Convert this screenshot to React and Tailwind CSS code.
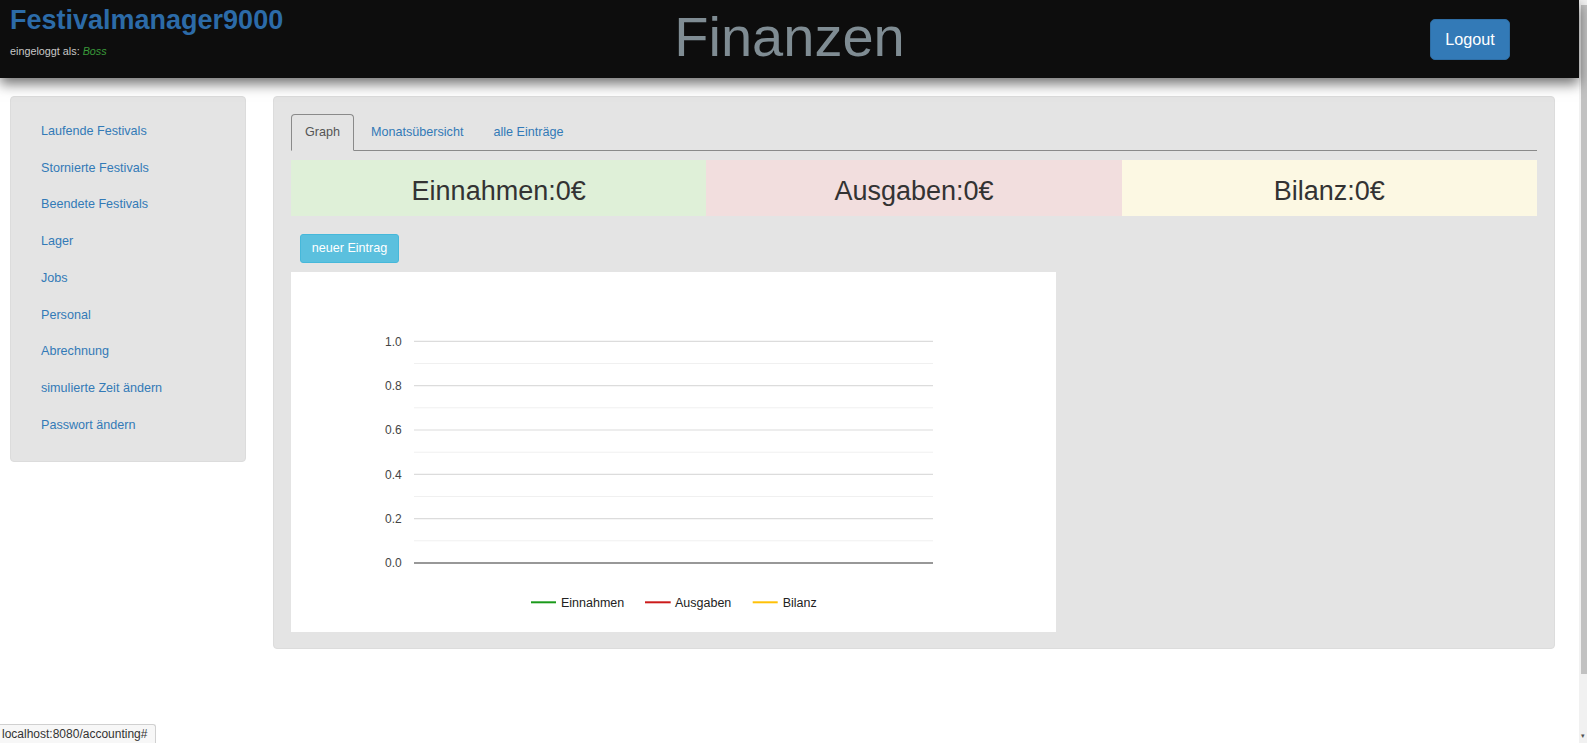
import React from "react";

const links = [
  "Laufende Festivals",
  "Stornierte Festivals",
  "Beendete Festivals",
  "Lager",
  "Jobs",
  "Personal",
  "Abrechnung",
  "simulierte Zeit ändern",
  "Passwort ändern",
];

function Chart() {
  const left = 123;
  const right = 642;
  const majors = [
    { v: "1.0", y: 69.3 },
    { v: "0.8", y: 113.6 },
    { v: "0.6", y: 158 },
    { v: "0.4", y: 202.3 },
    { v: "0.2", y: 246.6 },
  ];
  const minors = [91.5, 135.8, 180.2, 224.5, 268.8];
  return (
    <svg width="765" height="360" viewBox="0 0 765 360" className="block">
      {minors.map((y) => (
        <line key={y} x1={left} x2={right} y1={y} y2={y} stroke="#f0f0f0" strokeWidth="1" />
      ))}
      {majors.map((m) => (
        <line key={m.v} x1={left} x2={right} y1={m.y} y2={m.y} stroke="#dcdcdc" strokeWidth="1.2" />
      ))}
      <line x1={left} x2={right} y1={291} y2={291} stroke="#767676" strokeWidth="1.6" />
      {[...majors, { v: "0.0", y: 291 }].map((m) => (
        <text
          key={"t" + m.v}
          x={110.7}
          y={m.y + 4.3}
          textAnchor="end"
          fontFamily="'Liberation Sans', Arial, sans-serif"
          fontSize="12"
          fill="#444"
        >
          {m.v}
        </text>
      ))}
      <line x1={240} x2={265} y1={330.3} y2={330.3} stroke="#1a9a1a" strokeWidth="2" />
      <text x={270} y={334.6} fontFamily="'Liberation Sans', Arial, sans-serif" fontSize="12.5" fill="#222">
        Einnahmen
      </text>
      <line x1={354} x2={379.7} y1={330.3} y2={330.3} stroke="#cc1a1a" strokeWidth="2" />
      <text x={384} y={334.6} fontFamily="'Liberation Sans', Arial, sans-serif" fontSize="12.5" fill="#222">
        Ausgaben
      </text>
      <line x1={461.7} x2={486.7} y1={330.3} y2={330.3} stroke="#ffc107" strokeWidth="2" />
      <text x={491.7} y={334.6} fontFamily="'Liberation Sans', Arial, sans-serif" fontSize="12.5" fill="#222">
        Bilanz
      </text>
    </svg>
  );
}

export default function App() {
  return (
    <div className="relative flex w-[1587px] h-[743px] overflow-hidden bg-white font-['Liberation_Sans',Arial,sans-serif]">
      <div className="w-[1579px] flex flex-col">
        {/* Header */}
        <header className="relative z-10 h-[78px] bg-[#0d0d0d] grid grid-cols-3 shadow-[0_6px_12px_rgba(0,0,0,0.55)]">
          <div className="pl-[10px] pt-[6.5px]">
            <div className="text-[27px] leading-[27px] font-bold text-[#2c6ba8]">Festivalmanager9000</div>
            <div className="mt-[10.5px] text-[10.8px] leading-[15px] text-[#c8c8c8]">
              eingeloggt als: <span className="italic text-[#3a9a3a]">Boss</span>
            </div>
          </div>
          <div className="flex justify-center pt-[8.6px]">
            <div className="text-[56px] leading-[56px] text-[#7f8c93]">Finanzen</div>
          </div>
          <div className="flex justify-end items-center pr-[69px]">
            <button className="w-[80px] h-[41px] rounded-[5px] bg-[#337ab7] border border-[#2e6da4] text-white text-[16.2px] leading-none">
              Logout
            </button>
          </div>
        </header>

        {/* Body */}
        <div className="flex items-start pt-[18px] pl-[10px] pr-[24px] gap-[27px]">
          {/* Sidebar */}
          <nav className="w-[236px] shrink-0 bg-[#e4e4e4] rounded-[4px] border border-[#dcdcdc] pt-[16px] pb-[17px]">
            {links.map((l) => (
              <div key={l} className="h-[36.75px] flex items-center pl-[30px] text-[12.6px] text-[#337ab7]">
                {l}
              </div>
            ))}
          </nav>

          {/* Main panel */}
          <main className="flex-1 bg-[#e4e4e4] rounded-[4px] border border-[#dcdcdc] pt-[17px] px-[17px] pb-[16px]">
            {/* Tabs */}
            <div className="flex h-[37px] border-b border-[#8a8a8a] text-[12.6px]">
              <div className="h-[37px] px-[13px] flex items-center rounded-t-[4px] border border-[#8a8a8a] border-b-[#e4e4e4] bg-[#e4e4e4] text-[#555]">
                Graph
              </div>
              <div className="ml-[2px] px-[15px] flex items-center text-[#337ab7]">Monatsübersicht</div>
              <div className="ml-[1px] px-[14px] flex items-center text-[#337ab7]">alle Einträge</div>
            </div>

            {/* Summary */}
            <div className="mt-[9px] grid grid-cols-3 h-[56px] text-[27px] text-[#333]">
              <div className="bg-[#dff0d8] flex items-center justify-center pt-[6px]">Einnahmen:0€</div>
              <div className="bg-[#f2dede] flex items-center justify-center pt-[6px]">Ausgaben:0€</div>
              <div className="bg-[#fcf8e3] flex items-center justify-center pt-[6px]">Bilanz:0€</div>
            </div>

            <button className="mt-[18px] ml-[9px] w-[99px] h-[29px] rounded-[3px] bg-[#5bc0de] border border-[#46b8da] text-white text-[12.6px] leading-none block">
              neuer Eintrag
            </button>

            <div className="mt-[9px] w-[765px] h-[360px] bg-white">
              <Chart />
            </div>
          </main>
        </div>
      </div>

      {/* Scrollbar */}
      <div className="w-[8px] h-full bg-[#f1f1f1] flex flex-col pt-[5px] pl-[2px]">
        <div className="w-[6px] h-[669px] bg-[#c1c1c1]" />
        <div className="flex-1" />
        <div className="text-[7px] leading-none text-[#505050] pb-[4px]">▾</div>
      </div>

      {/* Status bar overlay */}
      <div className="absolute left-0 bottom-0 h-[19px] w-[156px] bg-[#f7f7f7] border-t border-r border-[#d0d0d0] rounded-tr-[3px] pl-[2px] flex items-center text-[12px] text-[#333] whitespace-nowrap">
        localhost:8080/accounting#
      </div>
    </div>
  );
}
